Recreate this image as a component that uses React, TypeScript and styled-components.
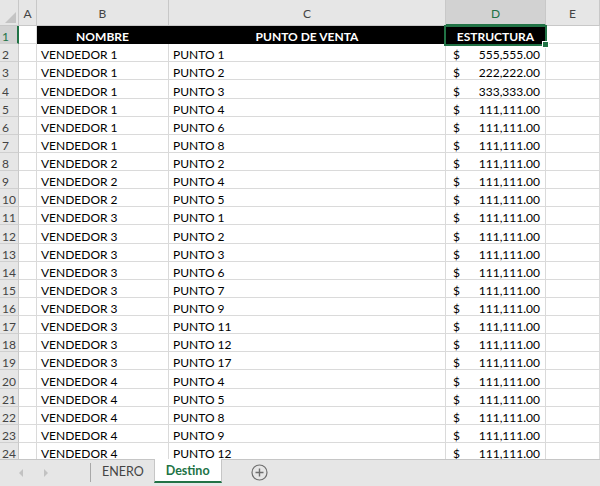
import React from "react";
import styled, { createGlobalStyle, css } from "styled-components";

const GREEN = "#217346";
const GRID = "#dadada";

const GlobalStyle = createGlobalStyle`
  html, body { margin: 0; padding: 0; background: #fff; overflow: hidden; }
  * { box-sizing: border-box; }
`;

const Sheet = styled.div`
  width: 600px;
  height: 486px;
  display: flex;
  flex-direction: column;
  font-family: Lato, "Liberation Sans", sans-serif;
  font-size: 12px;
  color: #000;
`;

const GridArea = styled.div`
  position: relative;
  height: 459px;
  overflow: hidden;
`;

const Grid = styled.div`
  display: grid;
  grid-template-columns: 19px 18px 132px 277px 100px 54px;
  grid-template-rows: 26px repeat(24, 18.13px);
`;

const Corner = styled.div`
  position: relative;
  background: #e6e6e6;
  border-right: 1px solid #c8c8c8;
  border-bottom: 1px solid #c8c8c8;
  &::after {
    content: "";
    position: absolute;
    right: 2px;
    bottom: 2px;
    width: 0;
    height: 0;
    border-left: 11px solid transparent;
    border-bottom: 11px solid #c4c4c4;
  }
`;

const ColHeader = styled.div<{ $sel?: boolean }>`
  display: flex;
  align-items: center;
  justify-content: center;
  background: ${(p) => (p.$sel ? "#d2d2d2" : "#e6e6e6")};
  color: ${(p) => (p.$sel ? GREEN : "#444")};
  border-right: 1px solid #c8c8c8;
  border-bottom: ${(p) => (p.$sel ? `2px solid ${GREEN}` : "1px solid #c8c8c8")};
  padding-top: ${(p) => (p.$sel ? "2px" : "1px")};
  font-size: 12px;
`;

const RowHeader = styled.div<{ $sel?: boolean }>`
  display: flex;
  align-items: flex-end;
  padding-left: 2px;
  background: ${(p) => (p.$sel ? "#d2d2d2" : "#e6e6e6")};
  color: ${(p) => (p.$sel ? GREEN : "#444")};
  border-right: ${(p) => (p.$sel ? `2px solid ${GREEN}` : "1px solid #c8c8c8")};
  border-bottom: 1px solid #cfcfcf;
  font-size: 12px;
  line-height: 1;
`;

const Cell = styled.div<{ $dark?: boolean }>`
  display: flex;
  align-items: flex-end;
  padding: 0 4px;
  white-space: nowrap;
  overflow: hidden;
  border-right: 1px solid ${GRID};
  border-bottom: 1px solid ${GRID};
  line-height: 1;
  ${(p) =>
    p.$dark &&
    css`
      background: #000;
      color: #fff;
      font-weight: 700;
      justify-content: center;
      border-right-color: #000;
      border-bottom-color: #000;
    `}
`;

const MoneyCell = styled(Cell)`
  justify-content: space-between;
  padding: 0 5px 0 7px;
`;

const Selection = styled.div`
  position: absolute;
  left: 444px;
  top: 25px;
  width: 103px;
  height: 21px;
  border: 2px solid ${GREEN};
  pointer-events: none;
`;

const FillHandle = styled.div`
  position: absolute;
  left: 542px;
  top: 41px;
  width: 7px;
  height: 7px;
  background: ${GREEN};
  border: 1px solid #fff;
`;

const TabBar = styled.div`
  height: 27px;
  display: flex;
  align-items: stretch;
  background: #e6e6e6;
  border-top: 1px solid #c6c6c6;
`;

const NavArrows = styled.div`
  width: 90px;
  display: flex;
  align-items: center;
  padding-left: 19px;
  gap: 21px;
`;

const Arrow = styled.span<{ $dir: "left" | "right" }>`
  width: 0;
  height: 0;
  border-top: 4px solid transparent;
  border-bottom: 4px solid transparent;
  ${(p) =>
    p.$dir === "left"
      ? css`border-right: 4px solid #c2c2c2;`
      : css`border-left: 4px solid #c2c2c2;`}
`;

const Separator = styled.div`
  width: 1px;
  margin: 3px 0 4px;
  background: #a8a8a8;
`;

const Tabs = styled.div`
  display: flex;
  align-items: stretch;
  margin-bottom: 3px;
`;

const Tab = styled.div<{ $active?: boolean }>`
  display: flex;
  align-items: center;
  justify-content: center;
  font-size: 12.5px;
  padding: 0 10px 0 11px;
  color: #444;
  ${(p) =>
    p.$active &&
    css`
      background: #fff;
      color: ${GREEN};
      font-weight: 700;
      padding: 0 11px 0 11px;
      margin-top: -1px;
      border-left: 1px solid #c6c6c6;
      border-right: 1px solid #c6c6c6;
      border-bottom: 2px solid ${GREEN};
    `}
`;

const AddButton = styled.div`
  display: flex;
  align-items: center;
  margin-left: 29px;
  padding-bottom: 2px;
`;

const rows: [string, string, string][] = [
  ["VENDEDOR 1", "PUNTO 1", "555,555.00"],
  ["VENDEDOR 1", "PUNTO 2", "222,222.00"],
  ["VENDEDOR 1", "PUNTO 3", "333,333.00"],
  ["VENDEDOR 1", "PUNTO 4", "111,111.00"],
  ["VENDEDOR 1", "PUNTO 6", "111,111.00"],
  ["VENDEDOR 1", "PUNTO 8", "111,111.00"],
  ["VENDEDOR 2", "PUNTO 2", "111,111.00"],
  ["VENDEDOR 2", "PUNTO 4", "111,111.00"],
  ["VENDEDOR 2", "PUNTO 5", "111,111.00"],
  ["VENDEDOR 3", "PUNTO 1", "111,111.00"],
  ["VENDEDOR 3", "PUNTO 2", "111,111.00"],
  ["VENDEDOR 3", "PUNTO 3", "111,111.00"],
  ["VENDEDOR 3", "PUNTO 6", "111,111.00"],
  ["VENDEDOR 3", "PUNTO 7", "111,111.00"],
  ["VENDEDOR 3", "PUNTO 9", "111,111.00"],
  ["VENDEDOR 3", "PUNTO 11", "111,111.00"],
  ["VENDEDOR 3", "PUNTO 12", "111,111.00"],
  ["VENDEDOR 3", "PUNTO 17", "111,111.00"],
  ["VENDEDOR 4", "PUNTO 4", "111,111.00"],
  ["VENDEDOR 4", "PUNTO 5", "111,111.00"],
  ["VENDEDOR 4", "PUNTO 8", "111,111.00"],
  ["VENDEDOR 4", "PUNTO 9", "111,111.00"],
  ["VENDEDOR 4", "PUNTO 12", "111,111.00"],
];

export default function App() {
  return (
    <>
      <GlobalStyle />
      <Sheet>
        <GridArea>
          <Grid>
            <Corner />
            <ColHeader>A</ColHeader>
            <ColHeader>B</ColHeader>
            <ColHeader>C</ColHeader>
            <ColHeader $sel>D</ColHeader>
            <ColHeader>E</ColHeader>

            <RowHeader $sel>1</RowHeader>
            <Cell />
            <Cell $dark>NOMBRE</Cell>
            <Cell $dark>PUNTO DE VENTA</Cell>
            <Cell $dark>ESTRUCTURA</Cell>
            <Cell />

            {rows.map(([n, p, v], i) => (
              <React.Fragment key={i}>
                <RowHeader>{i + 2}</RowHeader>
                <Cell />
                <Cell>{n}</Cell>
                <Cell>{p}</Cell>
                <MoneyCell>
                  <span>$</span>
                  <span>{v}</span>
                </MoneyCell>
                <Cell />
              </React.Fragment>
            ))}
          </Grid>
          <Selection />
          <FillHandle />
        </GridArea>
        <TabBar>
          <NavArrows>
            <Arrow $dir="left" />
            <Arrow $dir="right" />
          </NavArrows>
          <Separator />
          <Tabs>
            <Tab>ENERO</Tab>
            <Tab $active>Destino</Tab>
          </Tabs>
          <AddButton>
            <svg width="17" height="17" viewBox="0 0 17 17">
              <circle cx="8.5" cy="8.5" r="7.5" fill="none" stroke="#6e6e6e" strokeWidth="1.2" />
              <path d="M8.5 4.5v8M4.5 8.5h8" stroke="#6e6e6e" strokeWidth="1.4" />
            </svg>
          </AddButton>
        </TabBar>
      </Sheet>
    </>
  );
}
